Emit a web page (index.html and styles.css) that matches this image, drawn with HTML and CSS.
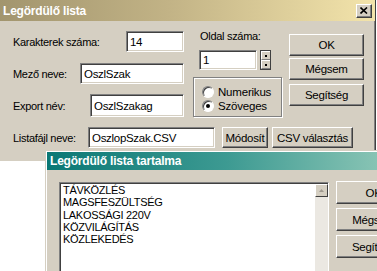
FILE: index.html
```html
<!DOCTYPE html>
<html lang="hu">
<head>
    <meta charset="UTF-8">
    <title>Legördülő lista</title>
    <link rel="stylesheet" href="styles.css">
</head>
<body>
    <div class="desktop">
        <!-- fő ablak -->
        <div class="window main-win">
            <div class="title-bar main-title">
                <span class="title">Legördülő lista</span>
                <span class="close-btn">
                    <svg width="8" height="7" viewBox="0 0 8 7"><path d="M0.5 0.5 L7 6.5 M7 0.5 L0.5 6.5" stroke="#000" stroke-width="1.6" fill="none"/></svg>
                </span>
            </div>
            <div class="win-body">
                <div class="top-area">
                    <div class="col-left">
                        <div class="field-row">
                            <span class="lbl">Karakterek száma:</span>
                            <div class="input w-char">14</div>
                        </div>
                        <div class="field-row">
                            <span class="lbl">Mező neve:</span>
                            <div class="input w-field">OszlSzak</div>
                        </div>
                        <div class="field-row row-tall">
                            <span class="lbl">Export név:</span>
                            <div class="input w-export">OszlSzakag</div>
                        </div>
                    </div>
                    <div class="col-mid">
                        <div class="mid-label">Oldal száma:</div>
                        <div class="spin-row">
                            <div class="input spin-input">1</div>
                            <div class="spinner">
                                <span class="spin-btn"><i></i></span>
                                <span class="spin-btn"><i></i></span>
                            </div>
                        </div>
                        <div class="group-box">
                            <div class="radio-row"><span class="radio"></span>Numerikus</div>
                            <div class="radio-row"><span class="radio checked"></span>Szöveges</div>
                        </div>
                    </div>
                    <div class="col-right">
                        <div class="btn btn-side">OK</div>
                        <div class="btn btn-side">Mégsem</div>
                        <div class="btn btn-side btn-help">Segítség</div>
                    </div>
                </div>
                <div class="bottom-row">
                    <span class="lbl lbl-list">Listafájl neve:</span>
                    <div class="input w-list">OszlopSzak.CSV</div>
                    <div class="btn btn-mod">Módosít</div>
                    <div class="btn btn-csv">CSV választás</div>
                </div>
            </div>
        </div>

        <!-- lista tartalma ablak -->
        <div class="window list-win">
            <div class="title-bar list-title">
                <span class="title">Legördülő lista tartalma</span>
            </div>
            <div class="list-body">
                <div class="listbox">
                    <div class="list-items">
                        <div>TÁVKÖZLÉS</div>
                        <div>MAGSFESZÜLTSÉG</div>
                        <div>LAKOSSÁGI 220V</div>
                        <div>KÖZVILÁGÍTÁS</div>
                        <div>KÖZLEKEDÉS</div>
                    </div>
                    <div class="scrollbar">
                        <span class="scroll-up">
                            <svg width="5" height="3" viewBox="0 0 5 3"><path d="M2.5 0 L5 3 L0 3 Z" fill="#a09a90"/></svg>
                        </span>
                    </div>
                </div>
                <div class="list-buttons">
                    <div class="btn btn-side">OK</div>
                    <div class="btn btn-side">Mégsem</div>
                    <div class="btn btn-side">Segítség</div>
                </div>
            </div>
        </div>
    </div>
</body>
</html>
```

FILE: styles.css
```css
body {
    margin: 0;
    background: #fff;
    font-family: 'Liberation Sans', Arial, sans-serif;
    font-size: 11px;
    letter-spacing: -0.3px;
    color: #000;
}
.desktop {
    position: relative;
    width: 377px;
    height: 271px;
    overflow: hidden;
}
.window {
    position: absolute;
    background: #d5cfc2;
}
.main-win {
    left: 0;
    top: 0;
    width: 375px;
    height: 161px;
    border-right: 1px solid #404040;
    box-shadow: inset -1px 0 0 #808080;
}
.title-bar {
    display: flex;
    align-items: center;
    color: #fff;
    font-weight: bold;
    font-size: 12px;
    letter-spacing: -0.2px;
}
.main-title {
    height: 21px;
    padding-left: 3px;
    background: linear-gradient(to right, #a2956e 0%, #c2b386 45%, #f3e4ab 100%);
}
.title {
    flex: 1;
}
.close-btn {
    width: 14px;
    height: 12px;
    margin-right: 3px;
    display: flex;
    align-items: center;
    justify-content: center;
    background: #d5cfc2;
    border-top: 1px solid #fff;
    border-left: 1px solid #fff;
    border-right: 1px solid #404040;
    border-bottom: 1px solid #404040;
    box-shadow: inset -1px -1px 0 #808080;
}
.input {
    box-sizing: border-box;
    flex-shrink: 0;
    background: #fff;
    border-top: 1px solid #808080;
    border-left: 1px solid #808080;
    border-right: 1px solid #fff;
    border-bottom: 1px solid #fff;
    box-shadow: inset 1px 1px 0 #404040, inset -1px -1px 0 #d5cfc2;
    padding: 0 3px;
    height: 21px;
    display: flex;
    align-items: center;
    font-size: 11.5px;
}
.btn {
    box-sizing: border-box;
    flex-shrink: 0;
    display: flex;
    align-items: center;
    justify-content: center;
    background: #d5cfc2;
    border-top: 1px solid #fff;
    border-left: 1px solid #fff;
    border-right: 1px solid #404040;
    border-bottom: 1px solid #404040;
    box-shadow: inset -1px -1px 0 #808080;
    font-size: 11.5px;
    letter-spacing: -0.3px;
    white-space: nowrap;
}
.top-area {
    display: flex;
    height: 96px;
}
.col-left {
    width: 171px;
    padding: 10px 0 0 13px;
    display: flex;
    flex-direction: column;
    gap: 11px;
}
.field-row {
    display: flex;
    align-items: center;
    justify-content: space-between;
    height: 21px;
}
.field-row.row-tall .input {
    height: 23px;
}
.w-char { width: 58px; }
.w-field { width: 104px; }
.w-export { width: 94px; }
.col-mid {
    width: 89px;
    margin-left: 9px;
    padding-top: 9px;
}
.mid-label {
    padding-left: 7px;
    line-height: 13px;
}
.spin-row {
    display: flex;
    margin: 7px 0 0 6px;
    gap: 3px;
}
.spin-input {
    width: 58px;
    height: 20px;
}
.spinner {
    display: flex;
    flex-direction: column;
    width: 11px;
    height: 20px;
    border: 1px solid #404040;
    box-sizing: border-box;
}
.spin-btn {
    flex: 1;
    display: flex;
    align-items: center;
    justify-content: center;
    border-top: 1px solid #fff;
    border-left: 1px solid #fff;
    border-bottom: 1px solid #808080;
}
.spin-btn i {
    width: 2px;
    height: 2px;
    background: #000;
}
.group-box {
    box-sizing: border-box;
    margin-top: 7px;
    height: 40px;
    border: 1px solid #808080;
    box-shadow: inset 1px 1px 0 #fff, 1px 1px 0 #fff;
    padding: 7px 0 0 8px;
}
.radio-row {
    display: flex;
    align-items: center;
    gap: 4px;
    height: 14px;
    font-size: 11.5px;
    letter-spacing: -0.2px;
}
.radio {
    box-sizing: border-box;
    width: 12px;
    height: 12px;
    border-radius: 50%;
    background: #fff;
    border: 1px solid;
    border-color: #808080 #fff #fff #808080;
    box-shadow: inset 1px 1px 0 #404040;
    display: flex;
    align-items: center;
    justify-content: center;
}
.radio.checked::after {
    content: "";
    width: 4px;
    height: 4px;
    border-radius: 50%;
    background: #000;
}
.col-right {
    margin-left: 7px;
    padding-top: 13px;
    display: flex;
    flex-direction: column;
    gap: 2px;
}
.btn-side {
    width: 75px;
    height: 22px;
}
.btn-help {
    margin-top: 2px;
}
.bottom-row {
    display: flex;
    align-items: center;
    margin-top: 10px;
    padding-left: 13px;
    height: 21px;
}
.lbl-list {
    width: 75px;
    flex-shrink: 0;
}
.w-list {
    width: 127px;
}
.btn-mod {
    width: 46px;
    height: 21px;
    margin-left: 7px;
}
.btn-csv {
    width: 81px;
    height: 21px;
    margin-left: 4px;
}
.list-win {
    left: 45px;
    top: 150px;
    width: 400px;
    height: 130px;
    border-top: 1px solid #d5cfc2;
    border-left: 1px solid #d5cfc2;
    box-shadow: inset 1px 1px 0 #fff;
    padding: 1px 0 0 1px;
}
.list-title {
    height: 18px;
    padding-left: 3px;
    background: linear-gradient(to right, #0a7875 0%, #3d9a92 45%, #8cc6b6 85%);
}
.list-body {
    display: flex;
    padding: 12px 0 0 12px;
}
.listbox {
    box-sizing: border-box;
    flex-shrink: 0;
    display: flex;
    width: 270px;
    height: 110px;
    background: #fff;
    border-top: 1px solid #808080;
    border-left: 1px solid #808080;
    border-right: 1px solid #fff;
    box-shadow: inset 1px 1px 0 #404040;
    padding: 1px 0 0 1px;
}
.list-items {
    flex: 1;
    padding: 0 0 0 2px;
    line-height: 12.3px;
    font-size: 11px;
    letter-spacing: -0.3px;
}
.scrollbar {
    width: 13px;
    background: #ebe8e2;
}
.scroll-up {
    box-sizing: border-box;
    display: flex;
    align-items: center;
    justify-content: center;
    height: 13px;
    background: #d5cfc2;
    border-top: 1px solid #fff;
    border-left: 1px solid #fff;
    border-right: 1px solid #404040;
    border-bottom: 1px solid #404040;
}
.list-buttons {
    display: flex;
    flex-direction: column;
    gap: 4px;
    margin-left: 7px;
    margin-top: -1px;
}
.list-buttons .btn-side {
    height: 23px;
}
```
